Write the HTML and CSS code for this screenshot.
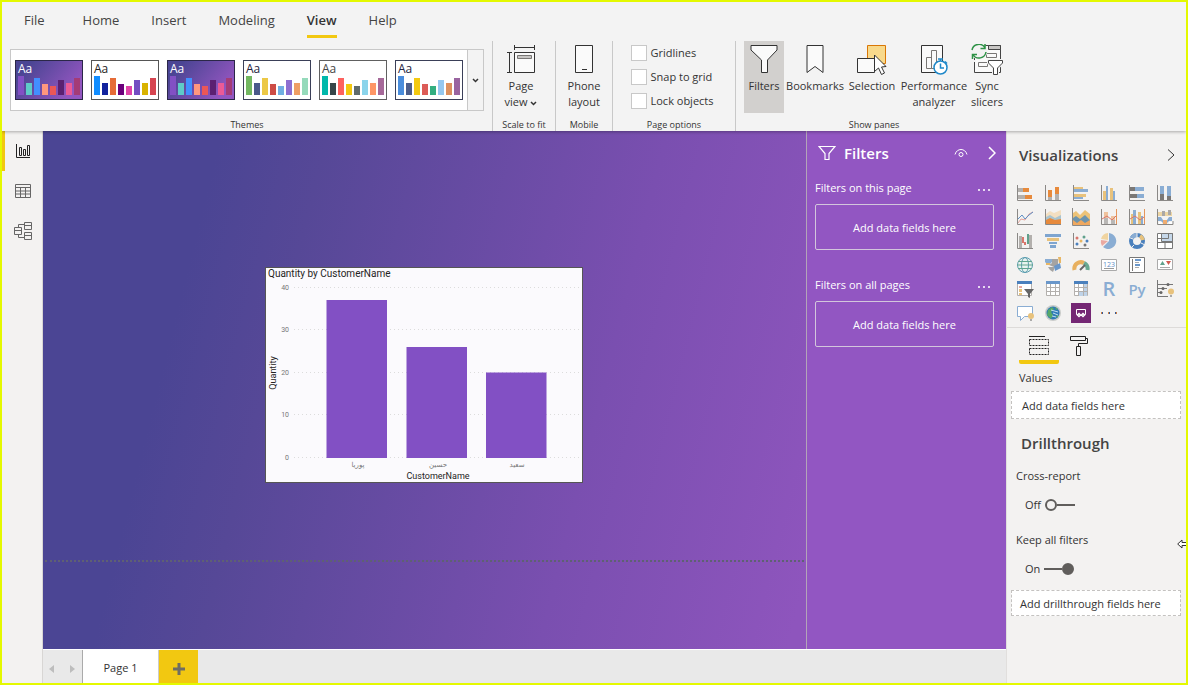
FILE: index.html
```html
<!DOCTYPE html>
<html lang="en">
<head>
<meta charset="utf-8">
<title>Report</title>
<link rel="stylesheet" href="styles.css">
</head>
<body class="app">
<header class="ribbon">
  <nav class="menu">
    <button class="menu-item menu-file">File</button>
    <button class="menu-item">Home</button>
    <button class="menu-item">Insert</button>
    <button class="menu-item">Modeling</button>
    <button class="menu-item is-active">View</button>
    <button class="menu-item">Help</button>
  </nav>
  <div class="groups">
    <section class="group group-themes">
      <div class="gallery">
        <button class="theme"><svg width="68" height="40" viewBox="0 0 68 40"><defs><linearGradient id="night" x1="0" y1="0" x2="1" y2=".5"><stop offset=".2" stop-color="#4b4594"/><stop offset="1" stop-color="#9356c0"/></linearGradient></defs><rect x=".5" y=".5" width="67" height="39" fill="url(#night)" stroke="#2b2748"/><text x="3" y="13" fill="#fff">Aa</text><path fill="#8250c4" d="M3 16h6v19H3z"/><path fill="#5ecbc8" d="M11 23h6v12h-6z"/><path fill="#438fff" d="M19 18h6v17h-6z"/><path fill="#ff977e" d="M27 24h6v11h-6z"/><path fill="#eb5757" d="M35 26h6v9h-6z"/><path fill="#5b2071" d="M43 20h6v15h-6z"/><path fill="#ec5a96" d="M51 23h6v12h-6z"/><path fill="#a43b76" d="M59 18h6v17h-6z"/></svg></button>
        <button class="theme"><svg width="68" height="40" viewBox="0 0 68 40"><rect x=".5" y=".5" width="67" height="39" fill="#fff" stroke="#555"/><text x="3" y="13" fill="#252423">Aa</text><path fill="#118dff" d="M3 16h6v19H3z"/><path fill="#12239e" d="M11 23h6v12h-6z"/><path fill="#e66c37" d="M19 18h6v17h-6z"/><path fill="#6b007b" d="M27 24h6v11h-6z"/><path fill="#e044a7" d="M35 26h6v9h-6z"/><path fill="#744ec2" d="M43 20h6v15h-6z"/><path fill="#d9b300" d="M51 23h6v12h-6z"/><path fill="#d64550" d="M59 18h6v17h-6z"/></svg></button>
        <button class="theme"><svg width="68" height="40" viewBox="0 0 68 40"><rect x=".5" y=".5" width="67" height="39" fill="url(#night)" stroke="#2b2748"/><text x="3" y="13" fill="#fff">Aa</text><path fill="#8250c4" d="M3 16h6v19H3z"/><path fill="#5ecbc8" d="M11 23h6v12h-6z"/><path fill="#438fff" d="M19 18h6v17h-6z"/><path fill="#ff977e" d="M27 24h6v11h-6z"/><path fill="#eb5757" d="M35 26h6v9h-6z"/><path fill="#5b2071" d="M43 20h6v15h-6z"/><path fill="#ec5a96" d="M51 23h6v12h-6z"/><path fill="#a43b76" d="M59 18h6v17h-6z"/></svg></button>
        <button class="theme"><svg width="68" height="40" viewBox="0 0 68 40"><rect x=".5" y=".5" width="67" height="39" fill="#fff" stroke="#3a3f58"/><text x="3" y="13" fill="#252440">Aa</text><path fill="#73b761" d="M3 16h6v19H3z"/><path fill="#4a588a" d="M11 23h6v12h-6z"/><path fill="#ecc846" d="M19 18h6v17h-6z"/><path fill="#cd4c46" d="M27 24h6v11h-6z"/><path fill="#71afe2" d="M35 26h6v9h-6z"/><path fill="#8d6fd1" d="M43 20h6v15h-6z"/><path fill="#ee9e64" d="M51 23h6v12h-6z"/><path fill="#95dabb" d="M59 18h6v17h-6z"/></svg></button>
        <button class="theme"><svg width="68" height="40" viewBox="0 0 68 40"><rect x=".5" y=".5" width="67" height="39" fill="#fff" stroke="#606060"/><text x="3" y="13" fill="#444">Aa</text><path fill="#01b8aa" d="M3 16h6v19H3z"/><path fill="#374649" d="M11 23h6v12h-6z"/><path fill="#fd625e" d="M19 18h6v17h-6z"/><path fill="#f2c80f" d="M27 24h6v11h-6z"/><path fill="#5f6b6d" d="M35 26h6v9h-6z"/><path fill="#8ad4eb" d="M43 20h6v15h-6z"/><path fill="#fe9666" d="M51 23h6v12h-6z"/><path fill="#a66999" d="M59 18h6v17h-6z"/></svg></button>
        <button class="theme"><svg width="68" height="40" viewBox="0 0 68 40"><rect x=".5" y=".5" width="67" height="39" fill="#fff" stroke="#3a3f58"/><text x="3" y="13" fill="#252440">Aa</text><path fill="#4a8ddc" d="M3 16h6v19H3z"/><path fill="#4c5d8a" d="M11 23h6v12h-6z"/><path fill="#f3c911" d="M19 18h6v17h-6z"/><path fill="#dc5b57" d="M27 24h6v11h-6z"/><path fill="#33ae81" d="M35 26h6v9h-6z"/><path fill="#95c8f0" d="M43 20h6v15h-6z"/><path fill="#dd915f" d="M51 23h6v12h-6z"/><path fill="#9a64a0" d="M59 18h6v17h-6z"/></svg></button>
        <button class="gallery-more" aria-label="More themes"><svg width="7" height="5" viewBox="0 0 7 5"><path d="M1 1l2.500 2.500L6 1" fill="none" stroke="#333" stroke-width="1.500"/></svg></button>
      </div>
      <h2 class="caption">Themes</h2>
    </section>
    <section class="group group-scale">
      <button class="tool"><svg width="30" height="32" viewBox="0 0 30 32" fill="none" stroke="#333"><path d="M8.500 1v5M28.500 1v5M9 3.500h19M1 8.500h5M1 28.500h5M3.500 9v19"/><path fill="#fafafa" d="M8.500 8.500h20v20h-20z"/><path fill="#c8c6c4" stroke="#797775" d="M11.500 11.500h14v3h-14z"/></svg><span>Page<br>view <svg width="7" height="5" viewBox="0 0 7 5"><path d="M1 1l2.500 2.500L6 1" fill="none" stroke="#333" stroke-width="1.500"/></svg></span></button>
      <h2 class="caption">Scale to fit</h2>
    </section>
    <section class="group group-mobile">
      <button class="tool"><svg width="20" height="32" viewBox="0 0 20 32" fill="#fafafa" stroke="#333"><path d="M1.500 1.500h17v27h-17zM8 25.500h5"/></svg><span>Phone<br>layout</span></button>
      <h2 class="caption">Mobile</h2>
    </section>
    <section class="group group-options">
      <div class="checks">
        <label class="check"><input type="checkbox">Gridlines</label>
        <label class="check"><input type="checkbox">Snap to grid</label>
        <label class="check"><input type="checkbox">Lock objects</label>
      </div>
      <h2 class="caption">Page options</h2>
    </section>
    <section class="group group-panes">
      <div class="tools">
        <button class="tool is-on"><svg width="30" height="32" viewBox="0 0 30 32" fill="#fafafa" stroke="#333"><path d="M2 1.500h26v4.500L18.500 16v12.500h-6V16L2 6z"/></svg><span>Filters</span></button>
        <button class="tool tool-bookmarks"><svg width="20" height="32" viewBox="0 0 20 32" fill="#fafafa" stroke="#333"><path d="M2 1.500h16v27l-8-6-8 6z"/></svg><span>Bookmarks</span></button>
        <button class="tool tool-selection"><svg width="30" height="32" viewBox="0 0 30 32" fill="#fafafa" stroke="#333"><path fill="#f8d98b" stroke="#d97706" d="M10.500 1.500h18v18h-18z"/><path d="M.5 14.500h17v14H.5z"/><path fill="#fff" d="M17.500 11v16.500l4-3.500 3 6.500 3-1.500-3-6 4.500-.5z"/></svg><span>Selection</span></button>
        <button class="tool tool-performance"><svg width="30" height="32" viewBox="0 0 30 32" fill="none" stroke="#333"><path fill="#fafafa" d="M2.500 1.500h21v27h-21z"/><path stroke="#797775" d="M7.500 13.500h5v11h-5zM12.500 6.500h5v18h-5z"/><circle cx="21.500" cy="23.500" r="6.500" fill="#fff" stroke="#1e88c9" stroke-width="1.500"/><path stroke="#1e88c9" stroke-width="1.500" d="M21.500 17v-2M19 15h5M21.500 19.500v4.500h3.500M26 17.500l2 2"/></svg><span>Performance<br>analyzer</span></button>
        <button class="tool"><svg width="34" height="32" viewBox="0 0 34 32" fill="none" stroke="#444"><path fill="#fafafa" d="M4.500 1.500h26v27h-26z"/><path fill="#c8c6c4" d="M18.500 1.500h12v4h-12z"/><path stroke="#797775" d="M16.500 9.500h10v4h-10zM8.500 18.500h9v4h-9z"/><circle cx="9" cy="7" r="8.500" fill="#f3f3f3" stroke="none"/><path stroke="#f3f3f3" stroke-width="3" d="M4 16v2"/><path stroke="#2e9246" stroke-width="1.500" d="M2 6a7 7 0 0 1 13-2M15 0v4.500h-4.500M16 8a7 7 0 0 1-13 2.500M2.500 15v-4.500H7"/><path fill="#fff" stroke="#f3f3f3" stroke-width="3" d="M18.500 16.500h14v2.500L27.500 24v6.500h-4V24l-5-5z"/><path fill="#fff" d="M18.500 16.500h14v2.500L27.500 24v6.500h-4V24l-5-5z"/></svg><span>Sync<br>slicers</span></button>
      </div>
      <h2 class="caption">Show panes</h2>
    </section>
  </div>
</header>
<div class="workspace">
  <nav class="rail">
    <button class="rail-item is-active" aria-label="Report view"><svg width="16" height="16" viewBox="0 0 16 16" fill="none" stroke="#222"><path d="M1.500 1v13.500H15" /><path d="M4.500 4.500h2v8h-2zM8.500 6.500h2v6h-2zM12.500 2.500h2v10h-2z"/></svg></button>
    <button class="rail-item" aria-label="Data view"><svg width="16" height="16" viewBox="0 0 16 16" fill="none" stroke="#666"><path d="M.5 1.500h15v13H.5zM.5 4.500h15M.5 8h15M.5 11h15M5.500 4.500v10M10.500 4.500v10"/></svg></button>
    <button class="rail-item" aria-label="Model view"><svg width="20" height="20" viewBox="0 0 20 20" fill="none" stroke="#666"><path d="M1.500 6.500h7v7h-7zM1.500 9.500h7M11.500 1.500h7v7h-7zM11.500 4.500h7M11.500 11.500h7v7h-7zM11.500 14.500h7M5.500 6.500v-3h6M5.500 13.500v3h6"/></svg></button>
  </nav>
  <main class="center">
    <div class="stage">
      <div class="canvas">
        <div class="page">
          <figure class="visual">
            <svg width="316" height="214" viewBox="0 0 316 214" role="img" aria-label="Quantity by CustomerName">
              <text class="chart-title" x="2" y="9">Quantity by CustomerName</text>
              <g stroke="#dcdcdc" stroke-dasharray="1 3"><path d="M28 19.500h288M28 61.500h288M28 104.500h288M28 146.500h288M28 189.500h288"/></g>
              <g class="chart-tick" text-anchor="end"><text x="23" y="22">40</text><text x="23" y="64">30</text><text x="23" y="107">20</text><text x="23" y="149">10</text><text x="23" y="192">0</text></g>
              <g fill="#8250c4"><path d="M60.500 32h60.500v158h-60.500zM140.500 79h60.500v111h-60.500zM220 104.500h60.500v85.500h-60.500z"/></g>
              <g class="chart-cat" text-anchor="middle"><text x="92" y="199">پوریا</text><text x="172" y="199">حسین</text><text x="251" y="199">سعید</text></g>
              <text class="chart-axis" x="172" y="211" text-anchor="middle">CustomerName</text>
              <text class="chart-axis" transform="translate(10 105) rotate(-90)" text-anchor="middle">Quantity</text>
            </svg>
          </figure>
        </div>
      </div>
      <aside class="filters">
        <div class="filters-head">
          <svg width="18" height="16" viewBox="0 0 18 16" fill="none" stroke="#fff" stroke-width="1.200"><path d="M1 1.500h16L11 8.500v6H7v-6z"/></svg>
          <h2 class="filters-title">Filters</h2>
          <button class="plain" aria-label="Hide filter pane"><svg width="14" height="10" viewBox="0 0 14 10" fill="none" stroke="#fff"><path d="M1 6.500C2 3 4.500 1.500 7 1.500S12 3 13 6.500"/><circle cx="7" cy="6.500" r="2"/></svg></button>
          <button class="plain" aria-label="Collapse"><svg width="8" height="14" viewBox="0 0 8 14" fill="none" stroke="#fff" stroke-width="1.500"><path d="M1 1l6 6-6 6"/></svg></button>
        </div>
        <section class="filter-block">
          <div class="filter-row"><h3 class="filter-name">Filters on this page</h3><button class="plain" aria-label="More"><svg width="12" height="2" viewBox="0 0 12 2" fill="#e6d8f0"><path d="M0 0h2v2H0zM5 0h2v2H5zM10 0h2v2h-2z"/></svg></button></div>
          <div class="filter-drop">Add data fields here</div>
        </section>
        <section class="filter-block">
          <div class="filter-row"><h3 class="filter-name">Filters on all pages</h3><button class="plain" aria-label="More"><svg width="12" height="2" viewBox="0 0 12 2" fill="#e6d8f0"><path d="M0 0h2v2H0zM5 0h2v2H5zM10 0h2v2h-2z"/></svg></button></div>
          <div class="filter-drop">Add data fields here</div>
        </section>
      </aside>
    </div>
    <footer class="sheets">
      <div class="pager">
        <button class="plain" aria-label="Previous"><svg width="5" height="8" viewBox="0 0 5 8"><path fill="#bdbdbd" d="M5 0v8L0 4z"/></svg></button>
        <button class="plain" aria-label="Next"><svg width="5" height="8" viewBox="0 0 5 8"><path fill="#bdbdbd" d="M0 0v8l5-4z"/></svg></button>
      </div>
      <button class="sheet">Page 1</button>
      <button class="sheet-add" aria-label="New page"><svg width="12" height="12" viewBox="0 0 12 12"><path fill="#6f6d62" d="M4.500 0h3v4.500H12v3H7.500V12h-3V7.500H0v-3h4.500z"/></svg></button>
    </footer>
  </main>
  <aside class="viz">
    <div class="viz-head"><h2 class="viz-title">Visualizations</h2><button class="plain" aria-label="Collapse"><svg width="8" height="12" viewBox="0 0 8 12" fill="none" stroke="#333"><path d="M1 .5L7 6l-6 5.500"/></svg></button></div>
    <div class="viz-grid">
      <button class="plain" aria-label="Stacked bar"><svg class="vi" viewBox="0 0 18 18"><path fill="#b3b0ad" d="M2 4h5v4H2zM2 11h7v4H2z"/><path fill="#e78a3c" d="M7 4h6v4H7zM9 11h7v4H9z"/><path class="ax" d="M1.500 1v15.500H17"/></svg></button>
      <button class="plain" aria-label="Stacked column"><svg class="vi" viewBox="0 0 18 18"><path fill="#b3b0ad" d="M4 13h4v3H4zM11 10h4v6h-4z"/><path fill="#e78a3c" d="M4 6h4v7H4zM11 3h4v7h-4z"/><path class="ax" d="M1.500 1v15.500H17"/></svg></button>
      <button class="plain" aria-label="Clustered bar"><svg class="vi" viewBox="0 0 18 18"><path fill="#e8c27c" d="M2 3h9v2H2zM2 10h12v3H2z"/><path fill="#8aadd3" d="M2 5h14v3H2zM2 13h9v2H2z"/><path class="ax" d="M1.500 1v15.500H17"/></svg></button>
      <button class="plain" aria-label="Clustered column"><svg class="vi" viewBox="0 0 18 18"><path fill="#e8c27c" d="M3 7h3v9H3zM10 4h3v12h-3z"/><path fill="#8aadd3" d="M6 2h2v14H6zM13 7h2v9h-2z"/><path class="ax" d="M1.500 1v15.500H17"/></svg></button>
      <button class="plain" aria-label="100% bar"><svg class="vi" viewBox="0 0 18 18"><path fill="#7a7876" d="M2 3h5v4H2zM2 10h7v4H2z"/><path fill="#8aadd3" d="M7 3h9v4H7zM9 10h7v4H9z"/><path class="ax" d="M1.500 1v15.500H17"/></svg></button>
      <button class="plain" aria-label="100% column"><svg class="vi" viewBox="0 0 18 18"><path fill="#7a7876" d="M4 10h4v6H4zM11 12h4v4h-4z"/><path fill="#8aadd3" d="M4 2h4v8H4zM11 2h4v10h-4z"/><path class="ax" d="M1.500 1v15.500H17"/></svg></button>

      <button class="plain" aria-label="Line"><svg class="vi" viewBox="0 0 18 18" fill="none"><path stroke="#e3a29a" d="M2 15l3-4 4 1 4-6 4-2"/><path stroke="#5f8fc6" d="M2 11l4-4 3 4 4-4 4-3"/><path class="ax" d="M1.500 1v15.500H17"/></svg></button>
      <button class="plain" aria-label="Area"><svg class="vi" viewBox="0 0 18 18"><path fill="#f3dfc1" d="M2 6l4-3 4 2 7-3v8H2z"/><path fill="#a9c4cf" d="M2 9l4-2 5 3 6-3v6H2z"/><path fill="#e78a3c" d="M2 12l4-2 5 2 6-1v5H2z"/><path class="ax" d="M1.500 1v15.500H17"/></svg></button>
      <button class="plain" aria-label="Stacked area"><svg class="vi" viewBox="0 0 18 18"><path fill="#edc377" d="M1 5l3-2 4 4 5-5 5 4v7H1z"/><path fill="#6d94ad" d="M1 10l3-2 4 3 5-4 5 5v4H1z"/><path fill="#efa85f" d="M1 12l4 3 4-3 4 3 5-3v5H1z"/><path class="ax" d="M.5 0v17.500H18"/></svg></button>
      <button class="plain" aria-label="Line and stacked column"><svg class="vi" viewBox="0 0 18 18" fill="none"><path fill="#efc39d" d="M4 4h4v8H4zM11 8h4v4h-4z"/><path fill="#b9b7b5" d="M4 10h4v6H4zM11 12h4v4h-4z"/><path stroke="#d8766c" d="M2 11l5-3 5 4 4-4"/><path stroke="#e5955a" d="M16.500 1v15"/><path class="ax" d="M1.500 1v15.500H17"/></svg></button>
      <button class="plain" aria-label="Line and clustered column"><svg class="vi" viewBox="0 0 18 18" fill="none"><path fill="#e8c27c" d="M3 6h2v10H3zM10 4h3v12h-3z"/><path fill="#8aadd3" d="M5 2h3v14H5zM13 8h2v8h-2z"/><path stroke="#d8766c" d="M2 11l5-3 5 4 4-3"/><path stroke="#e5955a" d="M16.500 1v15"/><path class="ax" d="M1.500 1v15.500H17"/></svg></button>
      <button class="plain" aria-label="Ribbon"><svg class="vi" viewBox="0 0 18 18"><path fill="#ecd5a4" d="M2 4h14v4H2z"/><path fill="#aaa8a6" d="M6 3h3v5H6zM12 2h3v5h-3z"/><path fill="#8aadd3" d="M2 9h3l2 3h4l2-3h3v4h-3l-2 2H7l-2-2H2z"/><path fill="#f0ad70" d="M7 12h4v4H7z"/><path fill="#fff" d="M3 14h3v2H3zM13 14h3v2h-3z"/><path class="ax" d="M1.500 1v15.500H17V13"/></svg></button>

      <button class="plain" aria-label="Waterfall"><svg class="vi" viewBox="0 0 18 18"><path fill="#b3b0ad" d="M3 4h3v12H3zM13 3h3v13h-3z"/><path fill="#d8766c" d="M6 5h2v6H6zM8 10h2v3H8z"/><path fill="#60a18c" d="M11 2h2v10h-2z"/><path class="ax" d="M1.500 1v15.500H17"/></svg></button>
      <button class="plain" aria-label="Funnel"><svg class="vi" viewBox="0 0 18 18"><path fill="#7ea5d0" d="M1 2h16v3H1zM5 10h8v2H5zM6 13h6v3H6z"/><path fill="#e8c27c" d="M3 6h12v3H3z"/></svg></button>
      <button class="plain" aria-label="Scatter"><svg class="vi" viewBox="0 0 18 18"><circle cx="5" cy="6" r="1.500" fill="#d8766c"/><circle cx="12" cy="5" r="1.500" fill="#60a18c"/><circle cx="9" cy="9" r="1.500" fill="#e8b765"/><circle cx="15" cy="9" r="1.500" fill="#4a80bd"/><circle cx="5" cy="12" r="1.500" fill="#4a80bd"/><circle cx="13" cy="13" r="1.500" fill="#777"/><path class="ax" d="M1.500 1v15.500H17"/></svg></button>
      <button class="plain" aria-label="Pie"><svg class="vi" viewBox="0 0 18 18"><path fill="#8aadd3" d="M9 9V1a8 8 0 1 1-6 14z"/><path fill="#eaa9a1" d="M8 9l-6 5a8 8 0 0 1-1-6z"/><path fill="#f0d4a0" d="M8 8L1 7a8 8 0 0 1 7-6z"/></svg></button>
      <button class="plain" aria-label="Donut"><svg class="vi" viewBox="0 0 18 18" fill="none" stroke-width="4"><circle cx="9" cy="9" r="6" stroke="#4a80bd"/><path stroke="#8aadd3" d="M9 3a6 6 0 0 0-5 3"/><path stroke="#e8c27c" d="M12 4a6 6 0 0 1 3 4"/><path stroke="#f2f1f0" stroke-width="1" d="M9 0v5M0 5l5 2M3 16l3-3M17 13l-4-2"/></svg></button>
      <button class="plain" aria-label="Treemap"><svg class="vi" viewBox="0 0 18 18" fill="#fff" stroke="#777"><path d="M1.500 1.500h15v15h-15z"/><path fill="#c5d7e9" d="M5.500 1.500h11v8h-11z"/><path fill="none" d="M1.500 6.500h11v-5M1.500 10.500h15M9 10v6"/></svg></button>

      <button class="plain" aria-label="Map"><svg class="vi" viewBox="0 0 18 18" fill="#e9f3ee" stroke="#5b9db0"><circle cx="9" cy="9" r="7.500"/><ellipse cx="9" cy="9" rx="3.500" ry="7.500" fill="none"/><path stroke="#62a58f" d="M2 5.500h14M1 9h16M2 12.500h14"/></svg></button>
      <button class="plain" aria-label="Filled map"><svg class="vi" viewBox="0 0 18 18"><path fill="#8aadd3" d="M1 3h7v3L6 8H3L1 6z"/><path fill="#a5a3a1" d="M8 3h6v6l-4 2-5-2 3-2zM4 11h7l-2 5-3-2z"/><path fill="#6a97ca" d="M10 10l6-3 1 5-6 3z"/><path fill="#e8b765" d="M14 1h3v6h-2zM2 7h4v2H2z"/></svg></button>
      <button class="plain" aria-label="Gauge"><svg class="vi" viewBox="0 0 18 18" fill="none" stroke-width="4"><path stroke="#e8b05f" d="M2.500 14a6.500 6.500 0 0 1 9.500-7"/><path stroke="#68a991" d="M12 7a6.500 6.500 0 0 1 3.500 7"/><path stroke="#666" stroke-width="2" d="M8 14l5-5"/></svg></button>
      <button class="plain" aria-label="Card"><svg class="vi" viewBox="0 0 18 18"><path fill="#fff" stroke="#aaa" d="M1.500 3.500h15v11h-15z"/><text x="9" y="11" class="card-num" text-anchor="middle">123</text><path stroke="#999" d="M4 12.500h10"/></svg></button>
      <button class="plain" aria-label="Multi-row card"><svg class="vi" viewBox="0 0 18 18" fill="#fff" stroke="#777"><path d="M1.500 1.500h15v15h-15z"/><path d="M4.500 3v12"/><path stroke="#6a97ca" stroke-width="2" d="M7 4h6M7 9h5"/><path stroke="#aaa" d="M7 6.500h4M7 11.500h4"/></svg></button>
      <button class="plain" aria-label="KPI"><svg class="vi" viewBox="0 0 18 18"><path fill="#fff" stroke="#aaa" d="M1.500 3.500h15v10h-15z"/><path fill="#60a18c" d="M4 9l2.500-4L9 9z"/><path fill="#cf5a50" d="M10 5h5l-2.500 4z"/><path stroke="#aaa" d="M4 11.500h10"/></svg></button>

      <button class="plain" aria-label="Slicer"><svg class="vi" viewBox="0 0 18 18"><path fill="#fff" stroke="#b3b0ad" d="M1.500 2.500h14v13h-14z"/><path fill="#4a80bd" d="M1 1h15v3H1z"/><path fill="#e8a99f" d="M3 6h3v2H3z"/><path fill="#e8c27c" d="M3 9h3v3H3zM3 13h3v2H3z"/><path fill="#666" d="M8 9h10l-4 5v4l-2-1v-3z"/></svg></button>
      <button class="plain" aria-label="Table"><svg class="vi" viewBox="0 0 18 18"><path fill="#fff" stroke="#b3b0ad" d="M2.500 2.500h13v13h-13zM2 7.500h14M2 11.500h14M6.500 3v13M11.500 3v13"/><path fill="#6a97ca" d="M2 1h14v3H2z"/></svg></button>
      <button class="plain" aria-label="Matrix"><svg class="vi" viewBox="0 0 18 18"><path fill="#fff" stroke="#b3b0ad" d="M2.500 2.500h13v13h-13z"/><path fill="#bfd3e8" d="M11 4h4v12H7v-4h4z"/><path fill="none" stroke="#b3b0ad" d="M2 7.500h14M2 11.500h14M6.500 3v13M11.500 3v13"/><path fill="#4a80bd" d="M2 1h14v3H2z"/></svg></button>
      <button class="plain viz-letter" aria-label="R script">R</button>
      <button class="plain viz-py" aria-label="Python">Py</button>
      <button class="plain" aria-label="Key influencers"><svg class="vi" viewBox="0 0 18 18" fill="none" stroke="#777"><path d="M1.500 0v16.500H12M2 4.500h15M2 8.500h9M2 12.500h4"/><g stroke="none"><circle cx="12" cy="4.500" r="1.500" fill="#666"/><circle cx="7" cy="8.500" r="1.500" fill="#666"/><circle cx="5" cy="12.500" r="1.500" fill="#666"/><circle cx="15" cy="11.500" r="3" fill="#e8c27c"/><path fill="#aaa" d="M14 15h2v2h-2z"/></g></svg></button>

      <button class="plain" aria-label="Q&amp;A"><svg class="vi" viewBox="0 0 18 18"><path fill="#fff" stroke="#8aadd3" d="M1.500 2.500h15v10h-8l-4 4v-4h-3z"/><circle cx="15" cy="12" r="3" fill="#e8c27c"/><path fill="#aaa" d="M14 15h2v2h-2z"/></svg></button>
      <button class="plain" aria-label="ArcGIS"><svg class="vi" viewBox="0 0 18 18"><circle cx="9" cy="9" r="8" fill="#c9cbc9"/><circle cx="9" cy="9" r="6.500" fill="#2d79b8"/><path fill="#55a868" d="M4 6l4-3 2 2-3 3 2 3-2 4-4-4zM11 3l3 2-2 1zM12 12l3-1-2 3z"/><path stroke="#bfe0ef" fill="none" d="M7 6l7 2M9 9l5 2M8 12l4 1"/></svg></button>
      <button class="plain" aria-label="Power Apps"><svg width="20" height="20" viewBox="0 0 20 20"><path fill="#742774" d="M0 0h20v20H0z"/><path fill="none" stroke="#fff" d="M6.500 11.500h-1v-5h9v5h-1"/><path fill="none" stroke="#fff" stroke-width="1.500" d="M6.500 12L8 10.500 9.500 12 8 13.500zM10.500 12l1.500-1.500 1.500 1.500-1.500 1.500z"/></svg></button>
      <button class="plain" aria-label="More visuals"><svg width="16" height="4" viewBox="0 0 16 4"><path fill="#d08142" d="M0 1h2v2H0zM7 1h2v2H7zM14 1h2v2h-2z"/><path fill="#335a99" d="M1 1h1v2H1zM8 1h1v2H8zM14 1h1v2h-1z"/></svg></button>
    </div>
    <div class="viz-tabs">
      <button class="viz-tab is-active" aria-label="Fields"><svg width="22" height="20" viewBox="0 0 22 20" fill="none" stroke="#222"><path d="M1 .5h16"/><path stroke-dasharray="2 1" d="M1.500 3.500h19v6h-19zM1.500 12.500h19v6h-19z"/></svg></button>
      <button class="viz-tab" aria-label="Format"><svg width="20" height="22" viewBox="0 0 20 22" fill="none" stroke="#222"><path d="M1.500 1.500h15v4h-15zM16.500 3.500h2v5h-9v3M7.500 11.500h4v9h-4z"/></svg></button>
    </div>
    <h3 class="viz-label viz-values">Values</h3>
    <div class="well">Add data fields here</div>
    <h2 class="viz-title viz-drill">Drillthrough</h2>
    <h3 class="viz-label" id="cross">Cross-report</h3>
    <label class="switch"><span>Off</span><input type="checkbox" aria-describedby="cross"></label>
    <h3 class="viz-label" id="keep">Keep all filters</h3>
    <label class="switch"><span>On</span><input type="checkbox" checked aria-describedby="keep"></label>
    <div class="well well-drill">Add drillthrough fields here</div>
    <svg class="pointer" width="11" height="10" viewBox="0 0 11 10"><path fill="#fff" stroke="#333" d="M.7 5L5 1v2.500h7v3H5V9z"/></svg>
  </aside>
</div>
</body>
</html>
```
FILE: styles.css
```css
*, ::before, ::after { box-sizing: border-box; }

.app {
  margin: 0;
  min-height: 100vh;
  display: flex;
  flex-direction: column;
  border: 2px solid #e4f900;
  background: #f3f2f1;
  color: #333;
  font: 12px/16px "Open Sans", "Noto Sans", sans-serif;
}

button {
  margin: 0;
  padding: 0;
  border: 0;
  background: none;
  color: inherit;
  font: inherit;
}

h2, h3, figure { margin: 0; font: inherit; }
svg { display: block; flex: none; }
.plain { display: flex; align-items: center; justify-content: center; }

/* Ribbon */
.ribbon {
  position: relative;
  z-index: 1;
  background: #f3f3f3;
  box-shadow: 0 1px 3px rgba(0, 0, 0, .3);
}
.menu {
  display: flex;
  gap: 32px;
  height: 38px;
  padding: 0 22px;
  font-size: 13px;
  color: #444;
}
.menu-item { height: 36px; padding-top: 2px; border-bottom: 3px solid transparent; }
.menu-file { margin-right: 6px; }
.menu-item.is-active { border-color: #f2c811; font-weight: 600; color: #333; }

.groups { display: flex; height: 91px; }
.group {
  display: flex;
  flex-direction: column;
  align-items: center;
  justify-content: space-between;
  border-right: 1px solid #c8c8c8;
  margin-top: 1px;
}
.caption { font-size: 9px; line-height: 12px; color: #333; }
.group-themes { width: 491px; padding-top: 8px; }
.group-scale { width: 63px; }
.group-scale .tool { padding-right: 6px; }
.group-mobile { width: 57px; }
.group-options { width: 123px; }
.group-panes { border: 0; padding-left: 8px; }

.gallery {
  display: flex;
  gap: 8px;
  height: 62px;
  padding-left: 4px;
  border: 1px solid #c8c8c8;
  background: #fff;
}
.theme text { font-size: 12px; }
.gallery-more {
  display: flex;
  align-items: center;
  justify-content: center;
  width: 16px;
  margin-left: -4px;
  border-left: 1px solid #c8c8c8;
  background: #f3f3f3;
}

.tools { display: flex; }
.tool {
  display: flex;
  flex-direction: column;
  align-items: center;
  gap: 2px;
  height: 72px;
  padding-top: 3px;
  font-size: 11px;
}
.tool span svg { display: inline-block; vertical-align: middle; }
.tool.is-on { width: 40px; background: #d2d0ce; }
.tool-bookmarks { width: 62px; }
.tool-selection { width: 52px; }
.tool-performance { width: 72px; }

.checks { display: flex; flex-direction: column; gap: 8px; padding-top: 4px; margin-right: 4px; }
.check { display: flex; align-items: center; gap: 4px; font-size: 11px; }
.check input {
  appearance: none;
  width: 16px;
  height: 16px;
  margin: 0;
  border: 1px solid #c8c8c8;
  background: #fff;
}

/* Workspace */
.workspace { flex: 1; display: flex; }
.rail { width: 41px; border-right: 1px solid #d8d6d4; }
.rail-item {
  display: flex;
  align-items: center;
  justify-content: center;
  width: 100%;
  height: 40px;
  border-left: 3px solid transparent;
  padding-right: 2px;
}
.rail-item.is-active { border-color: #f2c811; }

.center { flex: 1; display: flex; flex-direction: column; min-width: 0; }
.stage { flex: 1; display: flex; }
.canvas {
  flex: 1;
  background: linear-gradient(104deg, #4b4594 20%, #564897 32%, #7a4fb0 70%, #8e55bd 98%);
}
.page {
  position: relative;
  height: 431px;
  margin: 0 2px;
  border-bottom: 2px dotted #5f6073;
}
.visual {
  position: absolute;
  left: 220px;
  top: 136px;
  border: 1px solid #555;
  background: #fbfafd;
}
.visual text { font-family: Roboto, "DejaVu Sans", sans-serif; }
.visual .chart-title { font-size: 10px; fill: #252423; }
.visual .chart-tick { font-size: 7px; fill: #777; }
.visual .chart-cat { font-size: 7px; fill: #777; }
.visual .chart-axis { font-size: 9px; fill: #252423; }

.filters {
  width: 200px;
  border-left: 1px solid #b3a4b8;
  padding: 10px 12px 0 8px;
  background: #9256c2;
  color: #fff;
}
.filters-head {
  display: flex;
  align-items: center;
  gap: 8px;
  height: 24px;
  padding-left: 3px;
}
.filters-title { flex: 1; font-size: 15px; font-weight: 600; }
.filters-head .plain + .plain { margin: 0 -2px 0 12px; }
.filter-block { padding-top: 15px; margin-bottom: 12px; }
.filter-row {
  display: flex;
  align-items: center;
  justify-content: space-between;
  padding-right: 4px;
  margin-bottom: 8px;
}
.filter-name { font-size: 11px; }
.filter-row .plain { padding-top: 4px; }
.filter-drop {
  display: flex;
  align-items: center;
  justify-content: center;
  height: 46px;
  padding-top: 2px;
  border: 1px solid #d3c6dc;
  border-radius: 2px;
  font-size: 11px;
}

.sheets {
  display: flex;
  height: 34px;
  border-top: 1px solid #fff;
  background: #e9e9e9;
}
.pager {
  display: flex;
  align-items: center;
  justify-content: space-between;
  width: 40px;
  padding: 4px 7px 0 6px;
  border-right: 1px solid #aaa;
}
.sheet { width: 76px; padding-top: 2px; background: #fff; font-size: 11px; border-right: 1px solid #ccc; }
.sheet-add {
  display: flex;
  align-items: center;
  justify-content: center;
  width: 39px;
  padding-top: 4px;
  background: #f2c811;
}

/* Visualizations pane */
.viz { position: relative; width: 180px; border-left: 1px solid #e1dfdd; }
.viz-head {
  display: flex;
  align-items: center;
  justify-content: space-between;
  height: 50px;
  padding: 0 11px 2px 12px;
}
.viz-title { font-size: 15px; line-height: 20px; font-weight: 600; color: #444; }
.viz-grid {
  display: grid;
  grid-template-columns: repeat(6, 28px);
  grid-auto-rows: 24px;
  padding: 0 4px 2px;
  border-bottom: 1px solid #dddbd9;
}
.vi { width: 18px; height: 18px; }
.ax { fill: none; stroke: #8a8886; }
.card-num { font-size: 7px; fill: #5f8fc6; }
.viz-letter, .viz-py { color: #8aadd3; font-weight: 600; font-size: 20px; }
.viz-py { font-size: 15px; }
.viz-tabs { display: flex; padding-left: 12px; }
.viz-tab {
  display: flex;
  align-items: center;
  justify-content: center;
  width: 40px;
  height: 36px;
}
.viz-tab.is-active {
  background: linear-gradient(#f2c811, #f2c811) bottom / 100% 4px no-repeat;
  border-radius: 2px;
}
.viz-label { padding: 0 9px; font-size: 11px; }
.viz-values { padding: 6px 12px 5px; }
.well {
  display: flex;
  align-items: center;
  height: 28px;
  margin: 0 5px 0 4px;
  padding: 2px 10px 0;
  border: 1px dashed #c4c2c0;
  background: #fff;
  font-size: 11px;
}
.viz-drill { padding: 14px 14px 15px; }
.switch {
  display: flex;
  align-items: center;
  gap: 4px;
  padding: 13px 18px 19px;
  font-size: 11px;
}
.switch input {
  appearance: none;
  display: flex;
  align-items: center;
  width: 30px;
  height: 12px;
  margin: 0;
}
.switch input::before {
  content: "";
  width: 12px;
  height: 12px;
  border: 2px solid #605e5c;
  border-radius: 50%;
}
.switch input::after { content: ""; flex: 1; height: 2px; background: #605e5c; }
.switch input:checked { flex-direction: row-reverse; }
.switch input:checked::before { background: #605e5c; }
.well-drill { height: 26px; margin-top: -6px; padding: 2px 8px 0; }
.pointer { position: absolute; right: -2px; top: 408px; }
```
